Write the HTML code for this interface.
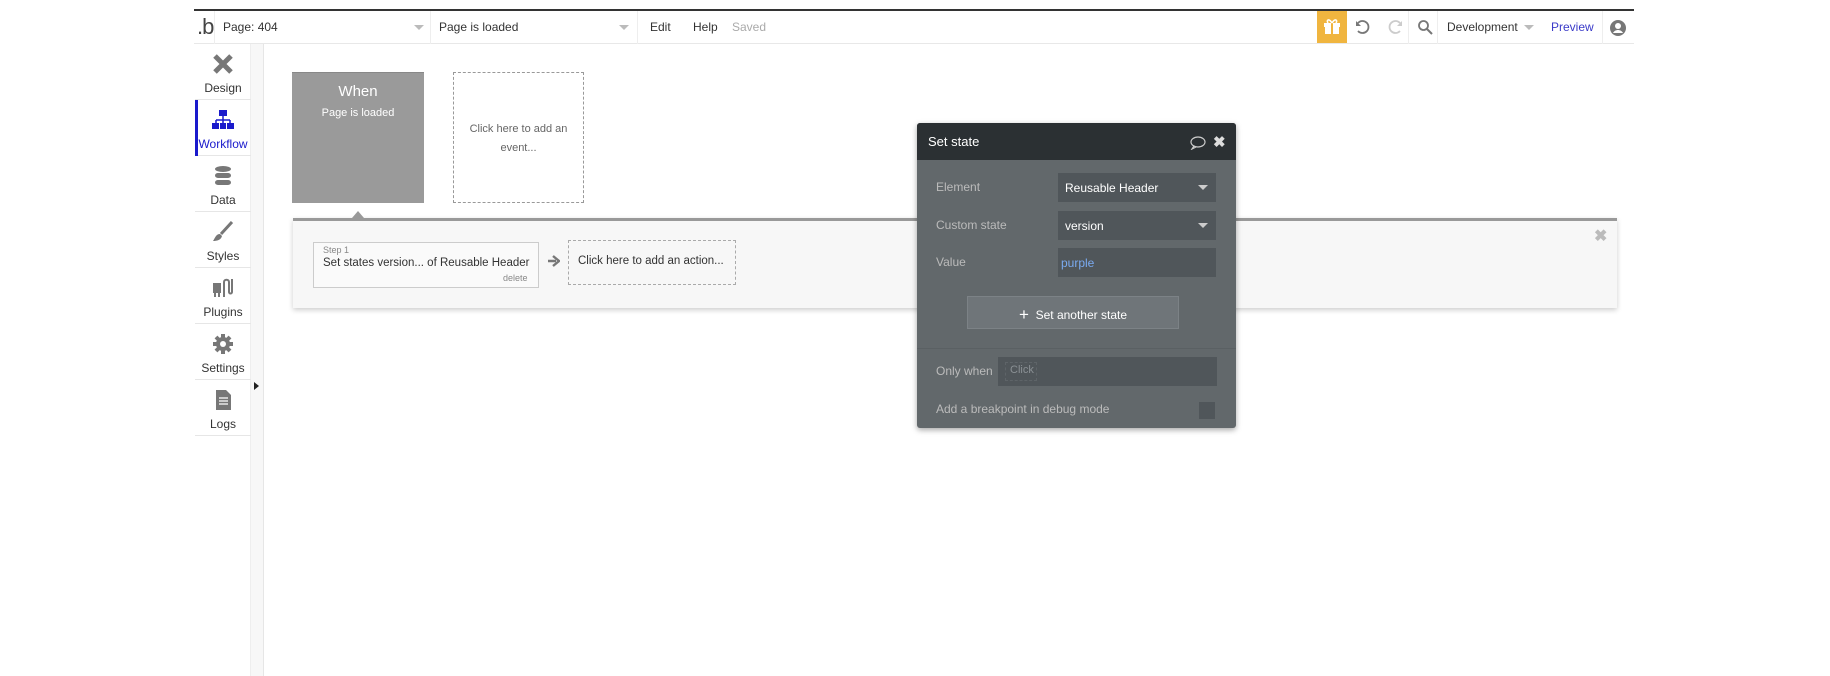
<!DOCTYPE html>
<html><head><meta charset="utf-8"><style>
*{box-sizing:border-box;margin:0;padding:0}
body{width:1830px;height:676px;background:#fff;font-family:"Liberation Sans",sans-serif;font-size:12px;color:#333;position:relative;overflow:hidden}
.a{position:absolute}
.t{position:absolute;white-space:nowrap}
.sb .it{position:absolute;left:0;width:56px;height:56px;border-bottom:1px solid #e6e6e6;text-align:center}
.sb .it span{position:absolute;left:0;right:0;bottom:4px;font-size:12px;color:#333}
.sb svg{position:absolute;left:17px;top:9px}
.lab{position:absolute;left:19px;color:#bbb;font-size:12px}
.inp{position:absolute;left:141px;width:158px;height:29px;background:#50565a;color:#fff;font-size:12px;padding:8px 7px}
.arr{position:absolute;right:8px;top:12px;border:5px solid transparent;border-top:5px solid #ccc;border-bottom:0}
</style></head><body>
<!-- top bar -->
<div class="a" style="left:194px;top:9px;width:1440px;height:2px;background:#333"></div>
<div class="a" style="left:194px;top:11px;width:1440px;height:33px;border-bottom:1px solid #e8e8e8"></div>
<div class="t" style="left:197px;top:14px;font-size:22px;color:#444;letter-spacing:-1px">.b</div>
<div class="a" style="left:214px;top:11px;width:1px;height:33px;background:#eee"></div>
<div class="t" style="left:223px;top:20px;font-size:12px">Page: 404</div>
<div class="a" style="left:414px;top:25px;border:5px solid transparent;border-top:5px solid #bbb;border-bottom:0"></div>
<div class="a" style="left:430px;top:11px;width:1px;height:33px;background:#eee"></div>
<div class="t" style="left:439px;top:20px;font-size:12px">Page is loaded</div>
<div class="a" style="left:619px;top:25px;border:5px solid transparent;border-top:5px solid #bbb;border-bottom:0"></div>
<div class="a" style="left:637px;top:11px;width:1px;height:33px;background:#eee"></div>
<div class="t" style="left:650px;top:20px">Edit</div>
<div class="t" style="left:693px;top:20px">Help</div>
<div class="t" style="left:732px;top:20px;color:#aaa">Saved</div>
<div class="a" style="left:1317px;top:11px;width:30px;height:32px;background:#f0b53f"></div>
<svg class="a" style="left:1323px;top:17px" width="18" height="18" viewBox="0 0 18 18"><rect x="1" y="6" width="16" height="4" fill="#fff"/><rect x="2" y="10" width="14" height="7" fill="#fff"/><rect x="8" y="6" width="2" height="11" fill="#f0b53f"/><path d="M9 6C6 1 3 3 5 6M9 6c3-5 6-3 4 0" stroke="#fff" stroke-width="1.6" fill="none"/></svg>
<svg class="a" style="left:1355px;top:19px" width="16" height="16" viewBox="0 0 16 16"><path d="M3 4A6 6 0 1 1 3 12" stroke="#777" stroke-width="1.8" fill="none"/><path d="M1 2v5h5z" fill="#777"/></svg>
<svg class="a" style="left:1387px;top:19px" width="16" height="16" viewBox="0 0 16 16"><path d="M13 4A6 6 0 1 0 13 12" stroke="#ccc" stroke-width="1.8" fill="none"/><path d="M15 2v5h-5z" fill="#ccc"/></svg>
<div class="a" style="left:1408px;top:11px;width:1px;height:33px;background:#eee"></div>
<svg class="a" style="left:1417px;top:19px" width="16" height="16" viewBox="0 0 16 16"><circle cx="6.5" cy="6.5" r="4.5" stroke="#777" stroke-width="1.8" fill="none"/><path d="M10 10l5 5" stroke="#777" stroke-width="2"/></svg>
<div class="a" style="left:1437px;top:11px;width:1px;height:33px;background:#eee"></div>
<div class="t" style="left:1447px;top:20px">Development</div>
<div class="a" style="left:1524px;top:25px;border:5px solid transparent;border-top:5px solid #bbb;border-bottom:0"></div>
<div class="t" style="left:1551px;top:20px;color:#3a3ac8">Preview</div>
<div class="a" style="left:1602px;top:11px;width:1px;height:33px;background:#eee"></div>
<svg class="a" style="left:1610px;top:20px" width="16" height="16" viewBox="0 0 16 16"><circle cx="8" cy="8" r="8" fill="#777"/><circle cx="8" cy="6" r="3" fill="#fff"/><path d="M3 13c2-4 8-4 10 0" fill="#fff"/></svg>
<!-- sidebar -->
<div class="a" style="left:251px;top:44px;width:13px;height:632px;background:#f7f7f7;border-right:1px solid #e6e6e6"></div>
<div class="a" style="left:250px;top:44px;width:1px;height:632px;background:#eee"></div>
<div class="sb a" style="left:195px;top:44px;width:56px;height:400px">
<div class="it" style="top:0"><svg width="22" height="22" viewBox="0 0 22 22"><path d="M3 3l16 16M19 3L3 19" stroke="#777" stroke-width="5"/></svg><span>Design</span></div>
<div class="it" style="top:56px"><svg width="22" height="22" viewBox="0 0 22 22"><rect x="7" y="1" width="8" height="6" fill="#1a1acc"/><path d="M11 7v4M4 11h14M4 11v3M11 11v3M18 11v3" stroke="#1a1acc" stroke-width="1.5"/><rect x="0" y="14" width="7" height="6" fill="#1a1acc"/><rect x="8" y="14" width="6" height="6" fill="#1a1acc"/><rect x="15" y="14" width="7" height="6" fill="#1a1acc"/></svg><span style="color:#1a1acc">Workflow</span></div>
<div class="it" style="top:112px"><svg width="22" height="22" viewBox="0 0 22 22"><ellipse cx="11" cy="4" rx="8" ry="3" fill="#777"/><rect x="3" y="8" width="16" height="5" rx="3" fill="#777"/><rect x="3" y="15" width="16" height="5" rx="3" fill="#777"/></svg><span>Data</span></div>
<div class="it" style="top:168px"><svg width="22" height="22" viewBox="0 0 22 22"><path d="M20 1L9 13" stroke="#777" stroke-width="3"/><path d="M8 13c-4 0-5 4-7 7 4 0 8-1 9-5z" fill="#777"/></svg><span>Styles</span></div>
<div class="it" style="top:224px"><svg width="22" height="22" viewBox="0 0 22 22"><rect x="1" y="6" width="8" height="10" fill="#777"/><path d="M3 16v4M7 16v4" stroke="#777" stroke-width="2"/><path d="M12 20V5c0-3 5-3 5 0v10c0 2 3 2 3 0V2" stroke="#777" stroke-width="2" fill="none"/></svg><span>Plugins</span></div>
<div class="it" style="top:280px"><svg width="22" height="22" viewBox="0 0 22 22"><circle cx="11" cy="11" r="7" fill="#777"/><path d="M11 1v20M1 11h20M4 4l14 14M18 4L4 18" stroke="#777" stroke-width="4"/><circle cx="11" cy="11" r="3" fill="#fff"/></svg><span>Settings</span></div>
<div class="it" style="top:336px"><svg width="22" height="22" viewBox="0 0 22 22"><path d="M4 1h10l5 5v15H4z" fill="#777"/><path d="M7 9h9M7 12h9M7 15h9" stroke="#fff" stroke-width="1.3"/></svg><span>Logs</span></div>
</div>
<div class="a" style="left:195px;top:100px;width:3px;height:56px;background:#1a1acc"></div>
<div class="a" style="left:254px;top:382px;border:4px solid transparent;border-left:5px solid #222;border-right:0"></div>
<!-- event boxes -->
<div class="a" style="left:292px;top:72px;width:132px;height:131px;background:#9a9a9a;border-top:1px solid #888"></div>
<div class="t" style="left:292px;top:83px;width:132px;text-align:center;color:#fff;font-size:15px">When</div>
<div class="t" style="left:292px;top:107px;width:132px;text-align:center;color:#fff;font-size:11px">Page is loaded</div>
<div class="a" style="left:453px;top:72px;width:131px;height:131px;border:1px dashed #999"></div>
<div class="t" style="left:453px;top:120px;width:131px;text-align:center;color:#666;font-size:11px;white-space:normal;line-height:19px;padding:0 10px">Click here to add an event...</div>
<!-- action panel -->
<div class="a" style="left:293px;top:218px;width:1324px;height:90px;background:#f7f7f7;border-top:3px solid #999;box-shadow:0 2px 5px rgba(0,0,0,.2)"></div>
<div class="a" style="left:352px;top:211px;border:6px solid transparent;border-bottom:7px solid #999;border-top:0"></div>
<div class="t" style="left:1594px;top:226px;font-size:16px;color:#bbb;font-weight:bold">✖</div>
<div class="a" style="left:313px;top:242px;width:226px;height:46px;border:1px solid #ccc;background:#fafafa"></div>
<div class="t" style="left:323px;top:245px;font-size:9px;color:#888">Step 1</div>
<div class="t" style="left:323px;top:257px;font-size:11.5px">Set states version... of Reusable Header</div>
<div class="t" style="left:503px;top:273px;font-size:9px;color:#888">delete</div>
<svg class="a" style="left:548px;top:255px" width="12" height="12" viewBox="0 0 12 12"><path d="M0 6h8M5 1l6 5-6 5" stroke="#777" stroke-width="2.4" fill="none"/></svg>
<div class="a" style="left:568px;top:240px;width:168px;height:45px;border:1px dashed #aaa"></div>
<div class="t" style="left:578px;top:255px;font-size:11.5px">Click here to add an action...</div>
<!-- popup -->
<div class="a" style="left:917px;top:123px;width:319px;height:305px;background:#62686b;border-radius:3px;box-shadow:0 2px 6px rgba(0,0,0,.35);overflow:hidden">
<div class="a" style="left:0;top:0;width:319px;height:37px;background:#2b3033"></div>
<div class="t" style="left:11px;top:11px;color:#fff;font-size:13px">Set state</div>
<svg class="a" style="left:273px;top:13px" width="16" height="14" viewBox="0 0 16 14"><ellipse cx="8" cy="6" rx="7" ry="5" stroke="#ccc" stroke-width="1.2" fill="none"/><path d="M4 10l-2 3 4-2" stroke="#ccc" stroke-width="1.2" fill="none"/></svg>
<div class="t" style="left:296px;top:10px;color:#ddd;font-size:15px;font-weight:bold">✖</div>
<div class="lab" style="top:57px">Element</div>
<div class="inp" style="top:50px">Reusable Header<div class="arr"></div></div>
<div class="lab" style="top:95px">Custom state</div>
<div class="inp" style="top:88px">version<div class="arr"></div></div>
<div class="lab" style="top:132px">Value</div>
<div class="inp" style="top:125px;color:#7aaaf0;padding-left:3px">purple</div>
<div class="a" style="left:50px;top:173px;width:212px;height:33px;background:#6f7579;border:1px solid #7c8286"></div>
<div class="t" style="left:50px;top:181px;width:212px;text-align:center;color:#fff;font-size:12px"><b style="font-size:17px;font-weight:normal;position:relative;top:1px">+</b>&nbsp; Set another state</div>
<div class="a" style="left:0;top:225px;width:319px;height:1px;background:#5a6063"></div>
<div class="lab" style="top:241px">Only when</div>
<div class="a" style="left:81px;top:234px;width:219px;height:29px;background:#50565a"></div>
<div class="a" style="left:88px;top:239px;width:32px;height:19px;border:1px dashed #5e6468"></div>
<div class="t" style="left:93px;top:241px;color:#8a9094;font-size:11px">Click</div>
<div class="lab" style="top:279px">Add a breakpoint in debug mode</div>
<div class="a" style="left:282px;top:279px;width:16px;height:17px;background:#50565a"></div>
</div>
</body></html>
